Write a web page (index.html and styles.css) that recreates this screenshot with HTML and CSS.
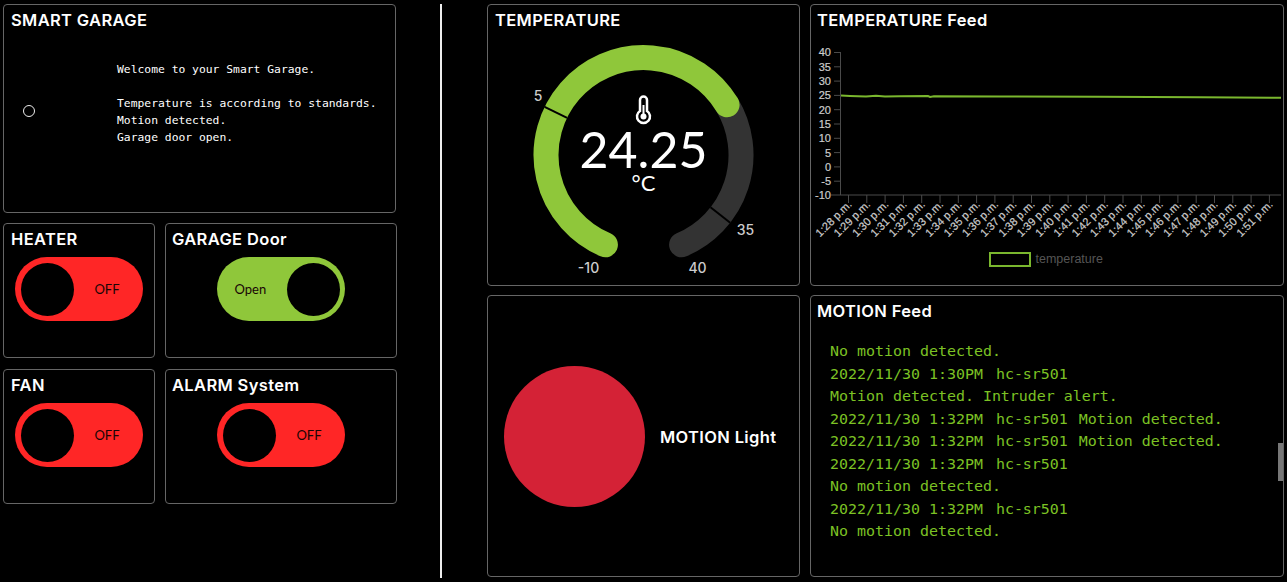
FILE: index.html
```html
<!DOCTYPE html>
<html lang="en">
<head>
    <meta charset="UTF-8">
    <title>Smart Garage</title>
    <link rel="stylesheet" href="styles.css">
</head>
<body>
    <div class="page">
        <div class="left-col">
            <div class="card smart-card">
                <div class="card-title">SMART GARAGE</div>
                <div class="status-row">
                    <span class="status-ring"></span>
                    <pre class="status-text">Welcome to your Smart Garage.

Temperature is according to standards.
Motion detected.
Garage door open.

</pre>
                </div>
            </div>
            <div class="toggle-grid">
                <div class="card">
                    <div class="card-title">HEATER</div>
                    <div class="toggle toggle-off"><span class="knob"></span><span class="toggle-label">OFF</span></div>
                </div>
                <div class="card">
                    <div class="card-title title-tight">GARAGE Door</div>
                    <div class="toggle toggle-on"><span class="toggle-label">Open</span><span class="knob"></span></div>
                </div>
                <div class="card">
                    <div class="card-title">FAN</div>
                    <div class="toggle toggle-off"><span class="knob"></span><span class="toggle-label">OFF</span></div>
                </div>
                <div class="card">
                    <div class="card-title title-tight">ALARM System</div>
                    <div class="toggle toggle-off"><span class="knob"></span><span class="toggle-label">OFF</span></div>
                </div>
            </div>
        </div>

        <div class="divider"></div>

        <div class="right-grid">
            <div class="card">
                <div class="card-title">TEMPERATURE</div>
                <svg class="gauge" width="311" height="255" viewBox="-155.5 -125 311 255">
                    <path class="gauge-track" d="M 83.57 -50.2 A 97.5 97.5 0 0 1 38.1 89.8"/>
                    <path class="gauge-value" d="M -38.1 89.8 A 97.5 97.5 0 1 1 83.57 -50.2"/>
                    <line class="gauge-tick" x1="-76.4" y1="-37.2" x2="-98.9" y2="-48.2"/>
                    <line class="gauge-tick" x1="67" y1="52.3" x2="86.7" y2="67.7"/>
                    <text class="gauge-label" x="-105.5" y="-54">5</text>
                    <text class="gauge-label" x="-55" y="118">-10</text>
                    <text class="gauge-label" x="54" y="118">40</text>
                    <text class="gauge-label" x="102" y="80">35</text>
                    <!-- thermometer -->
                    <path class="thermo-glass" d="M -3.5 -55 a 3.5 3.5 0 0 1 7 0 V -44 a 6.5 6.5 0 1 1 -7 0 Z"/>
                    <circle class="thermo-fill" cx="0" cy="-38.5" r="3"/>
                    <line class="thermo-bar" x1="0" y1="-38.5" x2="0" y2="-50"/>
                    <text class="gauge-number" x="0" y="13">24.25</text>
                    <text class="gauge-unit" x="0" y="36">°C</text>
                </svg>
            </div>

            <div class="card">
                <div class="card-title title-tight">TEMPERATURE Feed</div>
                <svg class="chart" width="472" height="255" viewBox="811 30 472 255">
                    <path class="chart-axis" d="M 840.5 52 V 195 M 831 195 H 1281 M 834 52.5 H 840.5 M 834 66.8 H 840.5 M 834 81.1 H 840.5 M 834 95.4 H 840.5 M 834 109.7 H 840.5 M 834 124 H 840.5 M 834 138.3 H 840.5 M 834 152.6 H 840.5 M 834 166.9 H 840.5 M 834 181.2 H 840.5"/>
                    <path class="chart-axis" d="M 848.5 195 V 203 M 866.8 195 V 203 M 885.1 195 V 203 M 903.4 195 V 203 M 921.7 195 V 203 M 940 195 V 203 M 958.3 195 V 203 M 976.6 195 V 203 M 994.9 195 V 203 M 1013.2 195 V 203 M 1031.5 195 V 203 M 1049.8 195 V 203 M 1068.1 195 V 203 M 1086.4 195 V 203 M 1104.7 195 V 203 M 1123 195 V 203 M 1141.3 195 V 203 M 1159.6 195 V 203 M 1177.9 195 V 203 M 1196.2 195 V 203 M 1214.5 195 V 203 M 1232.8 195 V 203 M 1251.1 195 V 203 M 1269.4 195 V 203"/>
                    <g class="chart-y">
                        <text x="831" y="56">40</text>
                        <text x="831" y="70.5">35</text>
                        <text x="831" y="85">30</text>
                        <text x="831" y="99">25</text>
                        <text x="831" y="113.5">20</text>
                        <text x="831" y="128">15</text>
                        <text x="831" y="142">10</text>
                        <text x="831" y="156.5">5</text>
                        <text x="831" y="170.5">0</text>
                        <text x="831" y="185">-5</text>
                        <text x="831" y="199">-10</text>
                    </g>
                    <polyline class="chart-line" points="841,95.6 850,96 866,96.6 876,95.8 885,96.4 900,96.2 928,96 930,97 934,96.2 1000,96.4 1100,96.8 1200,97.2 1281,97.7"/>
                    <g class="chart-x">
                        <text transform="translate(852.5 205) rotate(-45)">1:28 p.m.</text>
                        <text transform="translate(870.8 205) rotate(-45)">1:29 p.m.</text>
                        <text transform="translate(889.1 205) rotate(-45)">1:30 p.m.</text>
                        <text transform="translate(907.4 205) rotate(-45)">1:31 p.m.</text>
                        <text transform="translate(925.7 205) rotate(-45)">1:32 p.m.</text>
                        <text transform="translate(944 205) rotate(-45)">1:33 p.m.</text>
                        <text transform="translate(962.3 205) rotate(-45)">1:34 p.m.</text>
                        <text transform="translate(980.6 205) rotate(-45)">1:35 p.m.</text>
                        <text transform="translate(998.9 205) rotate(-45)">1:36 p.m.</text>
                        <text transform="translate(1017.2 205) rotate(-45)">1:37 p.m.</text>
                        <text transform="translate(1035.5 205) rotate(-45)">1:38 p.m.</text>
                        <text transform="translate(1053.8 205) rotate(-45)">1:39 p.m.</text>
                        <text transform="translate(1072.1 205) rotate(-45)">1:40 p.m.</text>
                        <text transform="translate(1090.4 205) rotate(-45)">1:41 p.m.</text>
                        <text transform="translate(1108.7 205) rotate(-45)">1:42 p.m.</text>
                        <text transform="translate(1127 205) rotate(-45)">1:43 p.m.</text>
                        <text transform="translate(1145.3 205) rotate(-45)">1:44 p.m.</text>
                        <text transform="translate(1163.6 205) rotate(-45)">1:45 p.m.</text>
                        <text transform="translate(1181.9 205) rotate(-45)">1:46 p.m.</text>
                        <text transform="translate(1200.2 205) rotate(-45)">1:47 p.m.</text>
                        <text transform="translate(1218.5 205) rotate(-45)">1:48 p.m.</text>
                        <text transform="translate(1236.8 205) rotate(-45)">1:49 p.m.</text>
                        <text transform="translate(1255.1 205) rotate(-45)">1:50 p.m.</text>
                        <text transform="translate(1273.4 205) rotate(-45)">1:51 p.m.</text>
                    </g>
                    <rect class="legend-box" x="990" y="253" width="40" height="13"/>
                    <text class="legend-text" x="1035.5" y="262.5">temperature</text>
                </svg>
            </div>

            <div class="card light-card">
                <span class="light-dot"></span>
                <span class="card-title light-title">MOTION Light</span>
            </div>

            <div class="card feed-card">
                <div class="card-title title-tight">MOTION Feed</div>
                <div class="feed">
                    <div>No motion detected.</div>
                    <div><span class="feed-time">2022/11/30 1:30PM</span><span>hc-sr501</span></div>
                    <div>Motion detected. Intruder alert.</div>
                    <div><span class="feed-time">2022/11/30 1:32PM</span><span class="feed-src">hc-sr501</span><span>Motion detected.</span></div>
                    <div><span class="feed-time">2022/11/30 1:32PM</span><span class="feed-src">hc-sr501</span><span>Motion detected.</span></div>
                    <div><span class="feed-time">2022/11/30 1:32PM</span><span>hc-sr501</span></div>
                    <div>No motion detected.</div>
                    <div><span class="feed-time">2022/11/30 1:32PM</span><span>hc-sr501</span></div>
                    <div>No motion detected.</div>
                </div>
                <div class="scroll-thumb"></div>
            </div>
        </div>
    </div>
</body>
</html>
```

FILE: styles.css
```css
html, body {
    margin: 0;
    height: 100%;
    background-color: #000;
    overflow: hidden;
}

body {
    color: #fff;
    font-family: "Lato", "Liberation Sans", sans-serif;
}

.page {
    display: flex;
    align-items: flex-start;
    padding: 4px 0 0 3px;
}

.left-col {
    width: 394px;
    flex: none;
}

.divider {
    width: 2px;
    height: 574px;
    margin-left: 43px;
    margin-right: 45px;
    flex: none;
    background-color: #eee;
}

.right-grid {
    display: grid;
    grid-template-columns: 313px 474px;
    grid-template-rows: 282px 282px;
    column-gap: 10px;
    row-gap: 9px;
}

/* 카드 */
.card {
    box-sizing: border-box;
    border: 1px solid #666;
    border-radius: 4px;
    background-color: #000;
    position: relative;
}

.card-title {
    height: 25px;
    padding: 5px 7px 0;
    box-sizing: border-box;
    font-family: "Inter", sans-serif;
    font-size: 16.5px;
    font-weight: 600;
    letter-spacing: 0.35px;
    line-height: 20px;
    white-space: nowrap;
}

.title-tight {
    padding-left: 6px;
}

/* smart garage */
.smart-card {
    width: 393px;
    height: 209px;
}

.status-row {
    display: flex;
    align-items: center;
    padding: 31px 0 0 19px;
    column-gap: 82px;
}

.status-ring {
    width: 10px;
    height: 10px;
    margin-bottom: 3px;
    border: 1.5px solid #eee;
    border-radius: 50%;
    flex: none;
}

.status-text {
    margin: 0;
    font-family: "DejaVu Sans Mono", monospace;
    font-size: 11.35px;
    line-height: 17px;
}

/* toggles */
.toggle-grid {
    display: grid;
    grid-template-columns: 152px 232px;
    grid-template-rows: 135px 135px;
    column-gap: 10px;
    row-gap: 11px;
    margin-top: 10px;
}

.toggle {
    display: flex;
    align-items: center;
    justify-content: space-between;
    box-sizing: border-box;
    width: 128px;
    height: 64px;
    margin: 8px auto 0;
    padding: 0 5.5px;
    border-radius: 32px;
    color: #1a0505;
    font-size: 13px;
}

.toggle-off {
    background-color: #ff2626;
}

.toggle-on {
    background-color: #8fc73a;
}

.knob {
    width: 53px;
    height: 53px;
    border-radius: 50%;
    background-color: #000;
    flex: none;
}

.toggle-off .toggle-label {
    margin-right: 18px;
}

.toggle-on .toggle-label {
    margin-left: 12px;
}

/* gauge */
.gauge {
    display: block;
}

.gauge-track,
.gauge-value {
    fill: none;
    stroke-width: 25;
    stroke-linecap: round;
}

.gauge-track {
    stroke: #333;
}

.gauge-value {
    stroke: #8fc73a;
}

.gauge-tick {
    stroke: #000;
    stroke-width: 2;
}

.gauge-label {
    fill: #ccc;
    font-family: "Inter", sans-serif;
    font-size: 14px;
    font-weight: 500;
    text-anchor: middle;
}

.gauge-number {
    fill: #fff;
    font-size: 50px;
    text-anchor: middle;
}

.gauge-unit {
    fill: #fff;
    font-size: 22px;
    text-anchor: middle;
}

.thermo-glass {
    fill: none;
    stroke: #fff;
    stroke-width: 2.5;
}

.thermo-fill {
    fill: #fff;
}

.thermo-bar {
    stroke: #fff;
    stroke-width: 2;
}

/* chart */
.chart {
    display: block;
}

.chart-axis {
    fill: none;
    stroke: #4a4a4a;
    stroke-width: 1;
}

.chart-line {
    fill: none;
    stroke: #7ab72e;
    stroke-width: 2;
}

.chart-y text,
.chart-x text {
    fill: #ccc;
    stroke: #ccc;
    stroke-width: 0.2;
    font-family: "Liberation Sans", sans-serif;
    font-size: 11px;
    text-anchor: end;
}

.legend-box {
    fill: none;
    stroke: #7ab72e;
    stroke-width: 2;
}

.legend-text {
    fill: #555;
    font-family: "Liberation Sans", sans-serif;
    font-size: 12.5px;
}

/* motion light */
.light-card {
    display: flex;
    align-items: center;
    padding-left: 16px;
    column-gap: 15px;
}

.light-dot {
    width: 141px;
    height: 141px;
    border-radius: 50%;
    background-color: #d42236;
    flex: none;
}

.light-title {
    height: auto;
    margin-top: 2px;
    padding: 0;
}

/* motion feed */
.feed {
    padding: 19px 0 0 19px;
    color: #7cc224;
    font-family: "DejaVu Sans Mono", monospace;
    font-size: 14.95px;
    line-height: 22.5px;
    white-space: nowrap;
}

.feed-time {
    margin-right: 13px;
}

.feed-src {
    margin-right: 11px;
}

.scroll-thumb {
    position: absolute;
    right: 0;
    top: 147px;
    width: 5px;
    height: 38px;
    background-color: #777;
}
```
